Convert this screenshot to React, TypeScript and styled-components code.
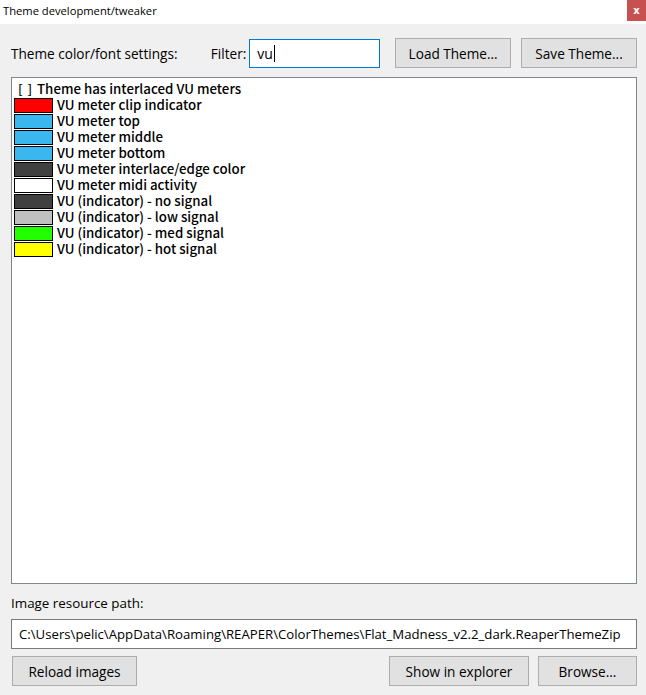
import styled, { createGlobalStyle } from "styled-components"

const Global = createGlobalStyle`
  html, body {
    margin: 0;
    padding: 0;
    background: #f0f0f0;
  }
  body {
    font-family: "Open Sans", "Noto Sans", sans-serif;
    color: #000;
  }
`

const items = [
  { color: "#ff0000", label: "VU meter clip indicator" },
  { color: "#3bb7f0", label: "VU meter top" },
  { color: "#3bb7f0", label: "VU meter middle" },
  { color: "#3bb7f0", label: "VU meter bottom" },
  { color: "#404040", label: "VU meter interlace/edge color" },
  { color: "#ffffff", label: "VU meter midi activity" },
  { color: "#404040", label: "VU (indicator) - no signal" },
  { color: "#c0c0c0", label: "VU (indicator) - low signal" },
  { color: "#22ff00", label: "VU (indicator) - med signal" },
  { color: "#ffff00", label: "VU (indicator) - hot signal" },
]

export default function App() {
  return (
    <Window>
      <Global />
      <TitleBar>
        <Title>Theme development/tweaker</Title>
        <CloseButton>x</CloseButton>
      </TitleBar>
      <Body>
        <TopRow>
          <Label>Theme color/font settings:</Label>
          <FilterLabel>Filter:</FilterLabel>
          <FilterInput>
            vu<Caret />
          </FilterInput>
          <Button $w={116} $ml={15}>Load Theme...</Button>
          <Button $w={116} $ml={10}>Save Theme...</Button>
        </TopRow>
        <ListBox>
          <Row>
            <Check>[ ]</Check>
            <ItemText>Theme has interlaced VU meters</ItemText>
          </Row>
          {items.map((it) => (
            <Row key={it.label}>
              <Swatch $c={it.color} />
              <ItemText>{it.label}</ItemText>
            </Row>
          ))}
        </ListBox>
        <PathLabel>Image resource path:</PathLabel>
        <PathBox>C:\Users\pelic\AppData\Roaming\REAPER\ColorThemes\Flat_Madness_v2.2_dark.ReaperThemeZip</PathBox>
        <BottomRow>
          <Button $w={125}>Reload images</Button>
          <Spacer />
          <Button $w={140}>Show in explorer</Button>
          <Button $w={99} $ml={9}>Browse...</Button>
        </BottomRow>
      </Body>
    </Window>
  )
}

const Window = styled.div`
  width: 646px;
  height: 695px;
  display: flex;
  flex-direction: column;
  overflow: hidden;
`

const TitleBar = styled.div`
  height: 24px;
  background: #fff;
  display: flex;
  align-items: flex-start;
  justify-content: space-between;
`

const Title = styled.div`
  font-family: "Open Sans", sans-serif;
  font-size: 11.2px;
  line-height: 24px;
  padding-left: 3px;
  margin-top: -1px;
`

const CloseButton = styled.div`
  width: 19px;
  height: 21px;
  background: #c75050;
  color: #fff;
  font-family: "DejaVu Sans", sans-serif;
  font-weight: bold;
  font-size: 10px;
  line-height: 21px;
  text-align: center;
`

const Body = styled.div`
  flex: 1;
  padding: 14px 9px 0 11px;
  display: flex;
  flex-direction: column;
`

const TopRow = styled.div`
  display: flex;
  align-items: center;
  height: 30px;
  margin-bottom: 9px;
`

const Label = styled.span`
  font-size: 13.6px;
  width: 200px;
`

const FilterLabel = styled.span`
  font-size: 13.6px;
  margin-right: 3px;
`

const FilterInput = styled.div`
  box-sizing: border-box;
  width: 131px;
  height: 29px;
  background: #fff;
  border: 1px solid #0078d7;
  font-size: 14px;
  padding-left: 7px;
  display: flex;
  align-items: center;
`

const Caret = styled.span`
  display: inline-block;
  width: 1px;
  height: 17px;
  background: #000;
  margin-left: 1px;
`

const Button = styled.div<{ $w: number; $ml?: number }>`
  box-sizing: border-box;
  width: ${(p) => p.$w}px;
  height: 30px;
  margin-left: ${(p) => p.$ml ?? 0}px;
  background: #e1e1e1;
  border: 1px solid #adadad;
  font-size: 13.6px;
  display: flex;
  align-items: center;
  justify-content: center;
`

const ListBox = styled.div`
  box-sizing: border-box;
  height: 507px;
  background: #fff;
  border: 1px solid #828790;
  padding: 3px 0 0 2px;
  display: flex;
  flex-direction: column;
`

const Row = styled.div`
  display: flex;
  align-items: center;
  height: 16px;
`

const Check = styled.span`
  font-family: "Noto Sans CJK KR", sans-serif;
  font-size: 13px;
  font-weight: 500;
  line-height: 14px;
  width: 23px;
  padding-left: 4px;
  box-sizing: border-box;
  letter-spacing: 1px;
`

const Swatch = styled.div<{ $c: string }>`
  box-sizing: border-box;
  width: 39px;
  height: 15px;
  background: ${(p) => p.$c};
  border: 1px solid #000;
  margin-right: 4px;
`

const ItemText = styled.span`
  font-family: "Noto Sans CJK KR", sans-serif;
  font-size: 13.3px;
  font-weight: 500;
  line-height: 14px;
`

const PathLabel = styled.div`
  font-size: 13.4px;
  margin-top: 10px;
  height: 20px;
`

const PathBox = styled.div`
  box-sizing: border-box;
  height: 30px;
  margin-top: 5px;
  background: #fff;
  border: 1px solid #7a7a7a;
  font-size: 13.2px;
  padding-left: 7px;
  display: flex;
  align-items: center;
  white-space: nowrap;
  overflow: hidden;
`

const BottomRow = styled.div`
  display: flex;
  margin-top: 7px;
  padding-left: 1px;
`

const Spacer = styled.div`
  flex: 1;
`
